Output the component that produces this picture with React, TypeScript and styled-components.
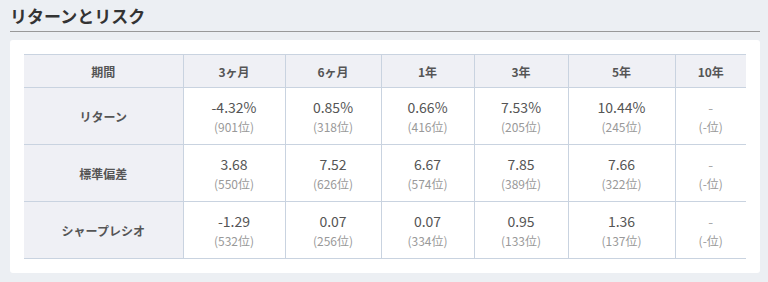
import React from 'react';
import styled, { createGlobalStyle } from 'styled-components';

const GlobalStyle = createGlobalStyle`
  body {
    margin: 0;
    background: #eceff3;
    font-family: "Noto Sans CJK JP", "Noto Sans", sans-serif;
    color: #555;
  }
`;

type Stat = { value: string; rank: string };
type Row = { label: string; stats: Stat[] };

const periods = ['3ヶ月', '6ヶ月', '1年', '3年', '5年', '10年'];
const colWidths = [159, 102, 96, 93, 94, 107, 71];

const rows: Row[] = [
  {
    label: 'リターン',
    stats: [
      { value: '-4.32%', rank: '901' },
      { value: '0.85%', rank: '318' },
      { value: '0.66%', rank: '416' },
      { value: '7.53%', rank: '205' },
      { value: '10.44%', rank: '245' },
      { value: '-', rank: '-' },
    ],
  },
  {
    label: '標準偏差',
    stats: [
      { value: '3.68', rank: '550' },
      { value: '7.52', rank: '626' },
      { value: '6.67', rank: '574' },
      { value: '7.85', rank: '389' },
      { value: '7.66', rank: '322' },
      { value: '-', rank: '-' },
    ],
  },
  {
    label: 'シャープレシオ',
    stats: [
      { value: '-1.29', rank: '532' },
      { value: '0.07', rank: '256' },
      { value: '0.07', rank: '334' },
      { value: '0.95', rank: '133' },
      { value: '1.36', rank: '137' },
      { value: '-', rank: '-' },
    ],
  },
];

const StyledSection = styled.section`
  padding: 0 8px 0 10px;
`;

const StyledTitle = styled.h2`
  margin: 0;
  padding: 5px 0 4px;
  font-size: 17px;
  line-height: 22px;
  font-weight: 700;
  color: #333;
  border-bottom: 1px solid #999;
`;

const StyledPanel = styled.div`
  margin-top: 8px;
  background: #fff;
  border-radius: 3px;
  padding: 14px 14px 14px;
`;

const StyledTable = styled.table`
  width: 722px;
  border-collapse: collapse;
  table-layout: fixed;
  border-top: 1px solid #c9d3e0;
  border-bottom: 1px solid #c9d3e0;
`;

const StyledHeadCell = styled.th`
  height: 32px;
  padding: 0;
  background: #eff0f5;
  font-size: 12px;
  font-weight: 700;
  color: #555;
  text-align: center;
  border-left: 1px solid #c9d3e0;
  border-bottom: 1px solid #c9d3e0;

  &:first-child {
    border-left: none;
  }
`;

const StyledLabelCell = styled.th`
  height: 56px;
  padding: 0;
  background: #eff0f5;
  font-size: 12px;
  font-weight: 700;
  color: #555;
  text-align: center;
  border-top: 1px solid #c9d3e0;
`;

const StyledValueCell = styled.td`
  padding: 0;
  text-align: center;
  border-left: 1px solid #c9d3e0;
  border-top: 1px solid #c9d3e0;
`;

const StyledValue = styled.div<{ $empty?: boolean }>`
  font-size: 14px;
  line-height: 20px;
  color: ${(p) => (p.$empty ? '#aaa' : '#555')};
`;

const StyledRank = styled.div`
  margin-top: 1px;
  font-size: 12px;
  line-height: 18px;
  color: #999;
`;

const App: React.FC = () => {
  return (
    <>
      <GlobalStyle />
      <StyledSection>
        <StyledTitle>リターンとリスク</StyledTitle>
        <StyledPanel>
          <StyledTable>
            <colgroup>
              {colWidths.map((w, i) => (
                <col key={i} style={{ width: w }} />
              ))}
            </colgroup>
            <thead>
              <tr>
                <StyledHeadCell>期間</StyledHeadCell>
                {periods.map((p) => (
                  <StyledHeadCell key={p}>{p}</StyledHeadCell>
                ))}
              </tr>
            </thead>
            <tbody>
              {rows.map((row) => (
                <tr key={row.label}>
                  <StyledLabelCell>{row.label}</StyledLabelCell>
                  {row.stats.map((s, i) => (
                    <StyledValueCell key={i}>
                      <StyledValue $empty={s.value === '-'}>{s.value}</StyledValue>
                      <StyledRank>({s.rank}位)</StyledRank>
                    </StyledValueCell>
                  ))}
                </tr>
              ))}
            </tbody>
          </StyledTable>
        </StyledPanel>
      </StyledSection>
    </>
  );
};

export default App;
